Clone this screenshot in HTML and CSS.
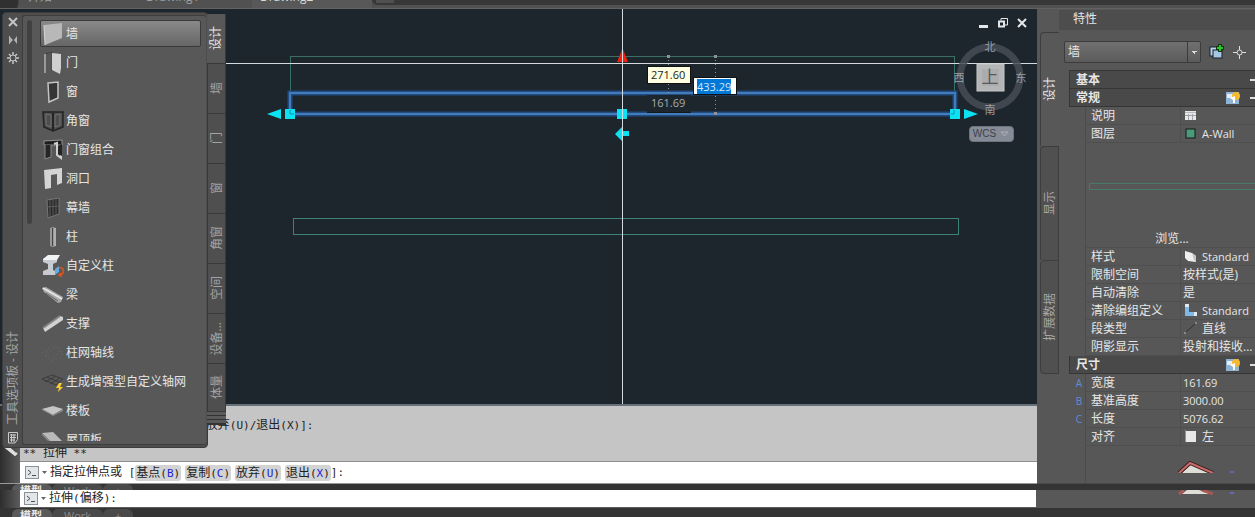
FILE: index.html
```html
<!DOCTYPE html>
<html lang="zh-CN">

<head>
    <meta charset="UTF-8">
    <meta name="viewport" content="width=device-width, initial-scale=1.0">
    <title>墙 - 设计</title>
    <link rel="stylesheet" href="styles.css">
</head>

<body>

    <nav class="file-tabs">
        <a href="#" class="file-tab start">开始</a>
        <a href="#" class="file-tab">Drawing1</a>
        <a href="#" class="file-tab active">Drawing2</a>
        <span class="file-rest"><i class="file-new"></i></span>
    </nav>

    <main class="main">
        <div class="workspace">

            <div class="canvas">
                <svg class="drawing" width="100%" height="100%">
                    <rect x="290.5" y="47.5" width="664" height="57" fill="none" stroke="#3a6f68" />
                    <rect x="290" y="84" width="665" height="21" fill="none" stroke="#214b82" stroke-width="5" />
                    <rect x="290" y="84" width="665" height="21" fill="none" stroke="#437db9" stroke-width="2" />
                    <rect x="293.5" y="209.5" width="665" height="16" fill="none" stroke="#3f8278" />
                    <g stroke="#8b9299" stroke-dasharray="1 3">
                        <path d="M668.5 47V105" />
                        <path d="M715.5 47V105" />
                    </g>
                    <g fill="#8b9299">
                        <rect x="667" y="46" width="3" height="3" />
                        <rect x="714" y="46" width="3" height="3" />
                        <rect x="714" y="103" width="3" height="3" />
                    </g>
                    <path d="M622.5 39L628 53H617Z" fill="#f0200c" />
                    <g fill="#0be2f2">
                        <rect x="285" y="100" width="10" height="10" />
                        <rect x="617" y="100" width="10" height="10" />
                        <rect x="950" y="100" width="10" height="10" />
                        <path d="M267 105L281 100V110Z" />
                        <path d="M978 105L964 100V110Z" />
                        <path d="M615 125L622 118V122H629V127H622V132Z" />
                    </g>
                    <path d="M290 101V105H294M954 101V105H951" fill="none" stroke="#168fa8" />
                    <g fill="#d5dade">
                        <rect x="226" y="54" width="100%" height="1" />
                        <rect x="622" y="0" width="1" height="100%" />
                    </g>
                </svg>

                <span class="dim dim-tip">271.60</span>
                <span class="dim dim-plain">161.69</span>
                <input class="dim dim-edit" id="stretch" type="text" value="433.29" aria-label="拉伸">

                <div class="window-buttons">
                    <button type="button" aria-label="最小化"><svg width="12" height="12"><path d="M1 8H10V11H1Z" fill="#e4e7ea" /></svg></button>
                    <button type="button" aria-label="还原"><svg width="12" height="12" fill="none" stroke="#e4e7ea"><path d="M4 3.5V1.5H10.5V8H8" /><path d="M2 4.5H7V9.5H2Z" stroke-width="2" /></svg></button>
                    <button type="button" aria-label="关闭"><svg width="12" height="12"><path d="M2 2L10 10M10 2L2 10" stroke="#e4e7ea" stroke-width="2" /></svg></button>
                </div>

                <div class="view-cube">
                    <svg width="78" height="78" viewBox="0 0 78 78">
                        <circle cx="38" cy="38" r="30" fill="none" stroke="#474e58" stroke-width="7" opacity=".85" />
                        <rect x="25" y="25" width="27" height="27" fill="#b3b5b6" stroke="#c7c9ca" />
                        <path d="M30 30H47V47H30Z" fill="#aaacad" />
                        <g class="compass">
                            <text x="38" y="12">北</text>
                            <text x="38" y="75">南</text>
                            <text x="7" y="43">西</text>
                            <text x="69" y="43">东</text>
                        </g>
                        <text class="cube-face" x="38" y="44">上</text>
                    </svg>
                    <button type="button" class="wcs">WCS <svg width="9" height="6"><path d="M1 1H8L4.5 5Z" fill="none" stroke="#a9aeb7" /></svg></button>
                </div>
            </div>

            <div class="history">
                <div class="grip">
                    <svg width="16" height="14"><path d="M2 0L12 8L14 6M5 0L13 7" fill="none" stroke="#e0e0e0" stroke-width="2" /></svg>
                </div>
                <div class="history-text">
                    <p>指定拉伸点或 <code>[</code>基点<code>(B)/</code>复制<code>(C)/</code>放弃<code>(U)/</code>退出<code>(X)]:</code></p>
                    <p></p>
                    <p><code>** </code>拉伸<code> **</code></p>
                </div>
            </div>

            <div class="prompt">
                <div class="prompt-line">
                    <svg class="prompt-icon" width="14" height="13"><rect x=".5" y=".5" width="13" height="12" fill="#e3e6e9" stroke="#8a9096" /><path d="M3 4L6 6.5L3 9M7 9.5H11" fill="none" stroke="#4a4f55" /></svg>
                    <svg class="prompt-arrow" width="5" height="3"><path d="M0 0H5L2.5 3Z" fill="#666" /></svg>
                    <span>指定拉伸点或<code> [</code></span>
                    <button type="button">基点<code>(<b>B</b>)</code></button>
                    <button type="button">复制<code>(<b>C</b>)</code></button>
                    <button type="button">放弃<code>(<b>U</b>)</code></button>
                    <button type="button">退出<code>(<b>X</b>)</code></button>
                    <code>]:</code>
                </div>
            </div>

            <section class="palette">
                <div class="palette-body">
                    <div class="palette-bar">
                        <svg width="12" height="12"><path d="M2 2L10 10M10 2L2 10" stroke="#c4c4c4" stroke-width="2" /></svg>
                        <svg width="12" height="12" fill="#b4b4b4"><path d="M2 2H3V10H2ZM3 3L6 6L3 9ZM10 2V10L7 6Z" /></svg>
                        <svg width="12" height="12" fill="none" stroke="#c4c4c4"><circle cx="6" cy="6" r="3" /><path d="M6 0V3M6 9V12M0 6H3M9 6H12M2 2L4 4M8 8L10 10M10 2L8 4M4 8L2 10" stroke-width="1.5" /></svg>
                        <span class="vertical palette-title">工具选项板 - 设计</span>
                        <svg width="12" height="13" fill="none" stroke="#c9c9c9"><path d="M1.5 1.5H10.5V8.5L8 12H1.5Z" /><path d="M3 4H9M3 6.5H9M3 9H8M4.5 3V11M7 3V11" /></svg>
                    </div>
                    <div class="palette-content">
                        <div class="scroll"></div>
                        <div class="tools">
                            <button type="button" class="tool selected"><svg viewBox="0 0 22 24"><path d="M2 3L20 1V16L3 23Z" fill="#b8b8b8" /><path d="M2 3L3 23" stroke="#d4d4d4" /></svg>墙</button>
                            <button type="button" class="tool"><svg viewBox="0 0 22 24"><path d="M3 3L10 1V20" fill="none" stroke="#444" /><path d="M3 3V22" stroke="#999" stroke-width="2" /><path d="M10 2L19 3V17L18 23L10 19Z" fill="#d0d0d0" /></svg>门</button>
                            <button type="button" class="tool"><svg viewBox="0 0 22 24"><path d="M6 3L16 2V18L7 22Z" fill="#353535" stroke="#c4c4c4" stroke-width="1.5" /></svg>窗</button>
                            <button type="button" class="tool"><svg viewBox="0 0 22 24" fill="#4d4d4d" stroke="#242424" stroke-width="1.5"><path d="M1 3H21V18L11 22L2 18Z" /><path d="M11 4V22" stroke-width="2" /><path d="M4 5L9 6V18L4 16ZM18 5L13 6V18L18 16Z" stroke="#707070" stroke-width="1" /></svg>角窗</button>
                            <button type="button" class="tool"><svg viewBox="0 0 22 24"><path d="M2 3L20 2V7H2Z" fill="#1d1d1d" stroke="#aaa" stroke-width=".8" /><path d="M3 7V21L9 19V7" fill="#262626" stroke="#888" /><path d="M12 6L15 5V17L19 20V7" fill="none" stroke="#d0d0d0" stroke-width="2" /><path d="M16 8L20 6V18L16 16Z" fill="#242424" /></svg>门窗组合</button>
                            <button type="button" class="tool"><svg viewBox="0 0 22 24"><path d="M2 3L20 1V16L15 18V7L9 8V21L3 22Z" fill="#d4d4d4" /></svg>洞口</button>
                            <button type="button" class="tool"><svg viewBox="0 0 22 24"><path d="M5 4L17 2V18L6 22Z" fill="#2b2b2b" stroke="#777" /><path d="M8 4V21M11 3V20M14 3V19M5 11L17 10" stroke="#5c5c5c" /></svg>幕墙</button>
                            <button type="button" class="tool"><svg viewBox="0 0 22 24"><path d="M8 3L11 2L14 3V21L11 22L8 21Z" fill="#999" /><path d="M10.5 3V21" stroke="#444" /><path d="M13 3V21" stroke="#c5c5c5" /></svg>柱</button>
                            <button type="button" class="tool"><svg viewBox="0 0 22 24"><path d="M1 5L6 1H18L15 6H1Z" fill="#f1f3f4" /><path d="M1 6H15V8L11 10V16L13 17V21H1V17L6 15V10L1 8Z" fill="#c5cbd0" /><path d="M13 21V15L17 12V18Z" fill="#66a9df" /><path d="M17 14C22 12 23 20 18 21M19 19L17 21L20 23" fill="none" stroke="#d9571f" stroke-width="1.5" /></svg>自定义柱</button>
                            <button type="button" class="tool"><svg viewBox="0 0 22 24"><path d="M0 5L4 4L21 14L19 19L16 20L2 9Z" fill="#a8a8a8" /><path d="M1 5L20 16" stroke="#e5e5e5" stroke-width="2" /><path d="M4 10L16 18" stroke="#656565" /></svg>梁</button>
                            <button type="button" class="tool"><svg viewBox="0 0 22 24"><path d="M1 16L18 4L21 5V8L3 20Z" fill="#d2d2d2" /><path d="M1 16L18 4" stroke="#858585" stroke-width="2" /></svg>支撑</button>
                            <button type="button" class="tool"><svg viewBox="0 0 22 24" fill="none" stroke="#6b6b6b" stroke-dasharray="1 3"><path d="M0 12L9 5L20 7M3 16L13 6M10 20L19 9" /><ellipse cx="12" cy="13" rx="8" ry="6" /></svg>柱网轴线</button>
                            <button type="button" class="tool"><svg viewBox="0 0 22 24"><path d="M0 9L10 5L21 9L14 15L0 9M5 7L17 12M3 12L14 6M8 14L18 8" fill="none" stroke="#3c3c3c" /><path d="M17 13L14 18H17L16 22L21 17H18L20 13Z" fill="#ffca2b" /></svg>生成增强型自定义轴网</button>
                            <button type="button" class="tool"><svg viewBox="0 0 22 24"><path d="M0 10L11 7L21 10L11 16Z" fill="#c5c5c5" /><path d="M0 10L11 16L21 10V12L11 17L0 11Z" fill="#888" /></svg>楼板</button>
                            <button type="button" class="tool"><svg viewBox="0 0 22 24"><path d="M0 5L11 4L21 14L11 16Z" fill="#b9b9b9" /><path d="M0 5L11 16V18L0 7Z" fill="#888" /></svg>屋顶板</button>
                        </div>
                    </div>
                </div>
                <div class="palette-tabs">
                    <button type="button" class="active"><span class="vertical">设计</span></button>
                    <button type="button"><span class="vertical">墙</span></button>
                    <button type="button"><span class="vertical">门</span></button>
                    <button type="button"><span class="vertical">窗</span></button>
                    <button type="button"><span class="vertical">角窗</span></button>
                    <button type="button"><span class="vertical">空间</span></button>
                    <button type="button"><span class="vertical">设备...</span></button>
                    <button type="button"><span class="vertical">体量</span></button>
                    <div class="tab-stack"></div>
                </div>
            </section>
        </div>

        <aside class="properties">
            <div class="prop-tabs">
                <button type="button" class="active"><span class="vertical">设计</span></button>
                <button type="button"><span class="vertical">显示</span></button>
                <button type="button"><span class="vertical">扩展数据</span></button>
            </div>
            <div class="prop-panel">
                <h2>特性</h2>
                <div class="prop-select">
                    <select aria-label="对象类型">
                        <option>墙</option>
                    </select>
                    <svg width="16" height="16"><rect x="1" y="3" width="9" height="9" fill="#b8d3ea" stroke="#17202a" /><rect x="4" y="6" width="9" height="8" fill="#a5c6e4" stroke="#17202a" /><path d="M11 0V8M7 4H15" stroke="#12330f" stroke-width="4" /><path d="M11 1V7M8 4H14" stroke="#29c729" stroke-width="2" /></svg>
                    <svg width="13" height="13" fill="none" stroke="#e0e0e0"><path d="M6.5 0V4M6.5 9V13M0 6.5H4M9 6.5H13" /><circle cx="6.5" cy="6.5" r="2.5" /></svg>
                </div>

                <div class="prop-list">
                    <h3>基本<i class="minus"></i></h3>
                    <h3>常规
                        <svg width="14" height="14"><path d="M0 1H13V13H0Z" fill="#8fb4d3" /><path d="M1 3H7V7H1Z" fill="#e9eef2" /><circle cx="10" cy="5" r="4" fill="#f6b92e" /><path d="M4 7L9 5V12H7V9Z" fill="#fff" /></svg>
                        <i class="minus"></i></h3>
                    <table>
                        <tr><td></td><th>说明</th><td><svg width="14" height="12"><rect x="2" y="2" width="11" height="9" fill="#e8e8e8" /><path d="M2 3.5H13" stroke="#b5b9bd" /><path d="M2 6.5H13M5.5 5V11M9.5 5V11" stroke="#a0a4a8" /></svg></td></tr>
                        <tr><td></td><th>图层</th><td><svg width="14" height="12"><rect x="3" y="2" width="9" height="9" fill="#4a9a7c" stroke="#161616" /></svg><span class="latin">A-Wall</span></td></tr>
                        <tr class="preview"><td></td><td colspan="2">
                            <div class="wall-preview"></div>
                            <button type="button" class="browse">浏览...</button>
                        </td></tr>
                        <tr><td></td><th>样式</th><td><svg width="14" height="12"><path d="M2 1L9 3L13 6V12L5 11L2 8Z" fill="#eee" /><path d="M9 3L13 6V12L11 10Z" fill="#c4c4c4" /></svg><span class="latin">Standard</span></td></tr>
                        <tr><td></td><th>限制空间</th><td>按样式(是)</td></tr>
                        <tr><td></td><th>自动清除</th><td>是</td></tr>
                        <tr><td></td><th>清除编组定义</th><td><svg width="14" height="12"><path d="M2 0H6V8H14V12H2Z" fill="#80b9e5" /><path d="M2 0H6V3H2ZM11 8H14V12H11Z" fill="#e2e9ee" /></svg><span class="latin">Standard</span></td></tr>
                        <tr><td></td><th>段类型</th><td><svg width="14" height="12"><path d="M2 11L13 1" stroke="#303030" /><path d="M1 10H3V12H1ZM12 0H14V2H12Z" fill="#888" /></svg>直线</td></tr>
                        <tr><td></td><th>阴影显示</th><td>投射和接收...</td></tr>
                    </table>
                    <h3>尺寸
                        <svg width="14" height="14"><path d="M0 1H13V13H0Z" fill="#8fb4d3" /><path d="M1 3H7V7H1Z" fill="#e9eef2" /><circle cx="10" cy="5" r="4" fill="#f6b92e" /><path d="M4 7L9 5V12H7V9Z" fill="#fff" /></svg>
                        <i class="minus"></i></h3>
                    <table>
                        <tr><td class="key">A</td><th>宽度</th><td class="latin">161.69</td></tr>
                        <tr><td class="key">B</td><th>基准高度</th><td class="latin">3000.00</td></tr>
                        <tr><td class="key">C</td><th>长度</th><td class="latin">5076.62</td></tr>
                        <tr><td></td><th>对齐</th><td><svg width="14" height="12"><rect x="3" y="1" width="10" height="11" fill="#e8e8e8" /><path d="M2.5 0V12" stroke="#4fa3e6" /></svg>左</td></tr>
                    </table>
                    <div class="wall-figure">
                        <svg width="60" height="12"><path d="M5 12L14 3L35 12Z" fill="#deded6" /><path d="M2 12L13 2L36 12" fill="none" stroke="#3a2020" stroke-width="4" /><path d="M2 12L13 2L36 12" fill="none" stroke="#c96b68" stroke-width="2" /><path d="M53 11H57" stroke="#6068b8" stroke-width="2" /></svg>
                    </div>
                </div>
            </div>
        </aside>
    </main>

    <nav class="layout-tabs">
        <a href="#" class="active">模型</a>
        <a href="#">Work</a>
        <a href="#">+</a>
    </nav>

    <footer class="status">
        <div class="prompt-line">
            <svg class="prompt-icon" width="14" height="13"><rect x=".5" y=".5" width="13" height="12" fill="#e3e6e9" stroke="#8a9096" /><path d="M3 4L6 6.5L3 9M7 9.5H11" fill="none" stroke="#4a4f55" /></svg>
            <svg class="prompt-arrow" width="5" height="3"><path d="M0 0H5L2.5 3Z" fill="#666" /></svg>
            <span>拉伸<code>(</code>偏移<code>):</code></span>
        </div>
        <div class="status-side">
            <svg width="60" height="5"><path d="M5 4L10 0H22L34 4Z" fill="#deded6" /><path d="M2 4L7 0M25 0L36 4" stroke="#a95754" stroke-width="3" /><path d="M53 3H57" stroke="#6068b8" stroke-width="2" /></svg>
        </div>
    </footer>

    <nav class="layout-tabs tall">
        <a href="#" class="active">模型</a>
        <a href="#">Work</a>
        <a href="#">+</a>
    </nav>

    <script>
        var stretch = document.getElementById("stretch");
        stretch.focus();
        stretch.select();
    </script>

</body>

</html>
```
FILE: styles.css
```css
* {
    box-sizing: border-box;
}

body {
    margin: 0;
    height: 100vh;
    display: flex;
    flex-direction: column;
    overflow: hidden;
    background-color: #575757;
    color: #e6e6e6;
    font-family: "Open Sans", "Noto Sans CJK SC", sans-serif;
    font-size: 12px;
    line-height: 18px;
}

button,
select,
input {
    font: inherit;
    color: inherit;
    border: none;
    padding: 0;
    background: none;
}

button {
    cursor: pointer;
}

a {
    color: inherit;
    text-decoration: none;
}

svg {
    flex: none;
    display: block;
}

code {
    font-family: "DejaVu Sans Mono", monospace;
    font-size: 11px;
    white-space: pre;
}

.latin {
    font-size: 11px;
}

.vertical {
    writing-mode: vertical-rl;
    text-orientation: sideways;
    transform: rotate(180deg);
    white-space: nowrap;
}

/* file tabs */
.file-tabs {
    flex: none;
    height: 9px;
    display: flex;
    align-items: flex-end;
    overflow: hidden;
    background-color: #515151;
    border-bottom: 1px solid #626262;
}

.file-tab {
    width: 120px;
    padding: 0 0 2px 14px;
    color: #a0a0a0;
}

.file-tab.start {
    width: 132px;
    padding-left: 28px;
    background: radial-gradient(circle at 6px 14px, #303030 12px, transparent 13px);
}

.file-tab.active {
    padding-left: 8px;
    background-color: #585858;
    color: #dcdcdc;
}

.file-rest {
    flex: 1;
    height: 5px;
    margin-bottom: 3px;
    background-color: #383838;
    border-bottom-left-radius: 5px;
}

.file-new {
    display: block;
    width: 18px;
    height: 3px;
    margin-left: 4px;
    background-color: #505050;
}

/* main area */
.main {
    flex: 1;
    min-height: 0;
    display: flex;
}

.workspace {
    position: relative;
    flex: 1;
    min-width: 0;
    display: flex;
    flex-direction: column;
}

.canvas {
    position: relative;
    flex: 1;
    min-height: 0;
    overflow: hidden;
    background-color: #1e262d;
}

.drawing {
    position: absolute;
    inset: 0;
}

.dim {
    position: absolute;
    width: 44px;
    height: 18px;
    padding-left: 3px;
    font-size: 11px;
    line-height: 16px;
}

.dim-tip {
    left: 647px;
    top: 57px;
    border: 1px solid #111;
    background-color: #ffffe1;
    color: #222;
}

.dim-plain {
    left: 647px;
    top: 86px;
    padding-left: 4px;
    background-color: #1e262d;
    border-bottom: 1px solid #14191d;
    color: #a8acb0;
}

.dim-edit {
    left: 693px;
    top: 68px;
    border: 1px solid #111;
    background-color: #fff;
    color: #222;
    outline: none;
}

.dim-edit::selection {
    background-color: #0078d7;
    color: #d5e8fa;
}

.window-buttons {
    position: absolute;
    top: 8px;
    right: 9px;
    display: flex;
    gap: 7px;
}

.view-cube {
    position: absolute;
    top: 30px;
    right: 7px;
    display: flex;
    flex-direction: column;
    align-items: center;
    gap: 9px;
}

.compass text {
    font-size: 11px;
    fill: #9a9ea4;
    text-anchor: middle;
}

.cube-face {
    font-size: 17px;
    fill: #55585c;
    text-anchor: middle;
}

.wcs {
    display: flex;
    align-items: center;
    justify-content: center;
    gap: 4px;
    width: 45px;
    height: 16px;
    border: 1px solid #6f757e;
    border-radius: 4px;
    background-color: #868c97;
    color: #3c424b;
    font-family: "Liberation Sans", sans-serif;
    font-size: 10px;
    line-height: 14px;
}

/* command line */
.history {
    flex: none;
    display: flex;
    border-top: 2px solid #66707a;
    background-color: #c5c5c5;
    color: #222;
    line-height: 14px;
}

.grip {
    display: flex;
    align-items: flex-end;
    width: 20px;
    padding-left: 3px;
    background: linear-gradient(to right, #2d2d2d, #5c5c5c);
}

.history-text {
    padding: 12px 0 1px 3px;
    white-space: nowrap;
}

.history p {
    margin: 0;
    height: 14px;
}

.prompt {
    flex: none;
    padding-left: 20px;
    border-bottom: 1px solid #999;
    background: linear-gradient(to right, #2d2d2d, #5c5c5c 20px);
}

.prompt-line {
    display: flex;
    align-items: center;
    height: 22px;
    padding-left: 5px;
    border-top: 1px solid #8f8f8f;
    background-color: #fff;
    color: #222;
    white-space: pre;
}

.prompt-icon {
    margin-right: 3px;
}

.prompt-arrow {
    margin-right: 3px;
}

.prompt-line button {
    height: 16px;
    margin-right: 4px;
    padding: 0 1px;
    border-radius: 3px;
    background-color: #d3d3d3;
    line-height: 16px;
}

.prompt-line button:last-of-type {
    margin-right: 0;
}

.prompt-line b {
    color: #2222d8;
    font-weight: normal;
}

/* tool palette floats over the drawing and the command line */
.palette {
    position: absolute;
    top: 3px;
    bottom: 36px;
    left: 2px;
    display: flex;
    align-items: flex-start;
}

.palette-body {
    align-self: stretch;
    display: flex;
    width: 206px;
    padding: 2px 1px 2px 0;
    border: 1px solid #3c3c3c;
    border-radius: 4px;
    background-color: #4e4e4e;
}

.palette-bar {
    display: flex;
    flex-direction: column;
    align-items: center;
    gap: 6px;
    width: 19px;
    padding: 1px 0;
}

.palette-title {
    margin-top: auto;
    color: #a6a6a6;
}

.palette-content {
    flex: 1;
    min-width: 0;
    display: flex;
    padding: 4px 0 3px 4px;
    border: 1px solid #3d3d3d;
    border-right: none;
    border-radius: 3px;
    background-color: #585858;
}

.scroll {
    width: 5px;
    height: 204px;
    margin-right: 8px;
    border-radius: 3px;
    background-color: #414141;
}

.tools {
    flex: 1;
    display: flex;
    flex-direction: column;
    gap: 2px;
    overflow: hidden;
}

.tool {
    flex: none;
    display: flex;
    align-items: center;
    gap: 2px;
    width: 161px;
    height: 27px;
    padding: 0 1px;
    border: 1px solid transparent;
    text-align: left;
}

.tool svg {
    width: 22px;
    height: 24px;
}

.tool.selected {
    border-color: #3a3a3a;
    border-radius: 2px;
    background: linear-gradient(#898989, #666);
}

.palette-tabs {
    display: flex;
    flex-direction: column;
    width: 19px;
    margin-top: 2px;
    margin-left: -1px;
    background-color: #4f4f4f;
}

.palette-tabs button {
    display: flex;
    align-items: center;
    justify-content: center;
    height: 50px;
    border: 1px solid #393939;
    border-top: none;
    color: #a3a3a3;
}

.palette-tabs .active {
    border-left: none;
    background-color: #585858;
    color: #e6e6e6;
}

.palette-tabs button:last-of-type {
    height: 48px;
}

.tab-stack {
    height: 13px;
    border-bottom: 1px solid #333;
    background: repeating-linear-gradient(#5a5a5a 0, #5a5a5a 3px, #333 3px, #333 4px);
}

/* properties */
.properties {
    flex: none;
    width: 218px;
    display: flex;
    overflow: hidden;
    padding-left: 3px;
    border-bottom: 1px solid #4a4a4a;
}

.prop-tabs {
    flex: none;
    display: flex;
    flex-direction: column;
    width: 19px;
    padding-top: 23px;
}

.prop-tabs button {
    display: flex;
    align-items: center;
    justify-content: center;
    height: 114px;
    border: 1px solid #3d3d3d;
    border-bottom: none;
    border-radius: 4px 0 0 0;
    background-color: #505050;
    color: #a6a6a6;
}

.prop-tabs button:last-child {
    border-bottom: 1px solid #3d3d3d;
    border-bottom-left-radius: 4px;
}

.prop-tabs .active {
    border-right: none;
    background-color: #585858;
    color: #e6e6e6;
}

.prop-panel {
    flex: 1;
    min-width: 0;
    display: flex;
    flex-direction: column;
}

h2,
h3 {
    margin: 0;
    font-size: 12px;
}

h2 {
    height: 20px;
    margin-top: 1px;
    padding-left: 14px;
    background-color: #4d4d4d;
    font-weight: normal;
}

.prop-select {
    display: flex;
    align-items: center;
    gap: 8px;
    padding: 11px 0 7px 5px;
}

.prop-select select {
    appearance: none;
    width: 137px;
    height: 22px;
    padding-left: 3px;
    border: 1px solid #3b3b3b;
    border-radius: 2px;
    background:
        linear-gradient(45deg, transparent 50%, #dedede 50%) right 6px top 9px / 3px 3px no-repeat,
        linear-gradient(315deg, transparent 50%, #dedede 50%) right 3px top 9px / 3px 3px no-repeat,
        linear-gradient(#3b3b3b, #3b3b3b) right 12px top 0 / 1px 100% no-repeat,
        linear-gradient(#707070, #5b5b5b);
}

.prop-list {
    flex: 1;
    min-height: 0;
    display: flex;
    flex-direction: column;
    margin-left: 10px;
    border-top: 1px solid #363636;
}

.prop-list h3 {
    flex: none;
    display: flex;
    align-items: center;
    height: 18px;
    padding-left: 6px;
    border-left: 1px solid #363636;
    border-bottom: 1px solid #363636;
    background-color: #494949;
    line-height: 16px;
}

.prop-list h3 svg {
    margin-left: auto;
    margin-right: 10px;
}

.minus {
    width: 5px;
    height: 2px;
    background-color: #ddd;
}

h3 .minus:only-child {
    margin-left: auto;
}

table {
    width: 100%;
    table-layout: fixed;
    border-spacing: 0;
}

tr > :first-child {
    width: 17px;
    border-right: 1px solid #4c4c4c;
    border-bottom: none;
}

th,
td {
    height: 18px;
    padding: 0;
    border-bottom: 1px solid #4f4f4f;
    font-weight: normal;
    line-height: 17px;
    text-align: left;
    white-space: nowrap;
}

th {
    width: 95px;
    padding-left: 5px;
    border-right: 1px solid #4f4f4f;
}

th + td {
    padding-left: 2px;
}

td svg {
    display: inline-block;
    margin-right: 5px;
    vertical-align: -1px;
}

td.key {
    padding-left: 4px;
    color: #5b8fdc;
    font-size: 10px;
    text-align: center;
}

.preview td {
    height: 105px;
    padding-left: 3px;
    vertical-align: bottom;
}

.wall-preview {
    height: 7px;
    margin-bottom: 39px;
    border: 1px solid #487a6a;
    border-right: none;
}

.browse {
    display: block;
    width: 100%;
    height: 18px;
}

.wall-figure {
    flex: 1;
    margin-left: 16px;
    padding: 15px 0 0 91px;
    border-left: 1px solid #4c4c4c;
}

/* layout tabs and second command line */
.layout-tabs {
    flex: none;
    display: flex;
    height: 6px;
    padding-left: 12px;
    overflow: hidden;
    background-color: #343434;
    color: #8d8d8d;
    font-size: 11px;
    line-height: 14px;
}

.layout-tabs.tall {
    height: 9px;
    padding-top: 1px;
}

.layout-tabs a {
    height: 16px;
    padding: 0 12px;
    border-radius: 6px 6px 0 0;
    background-color: #4a4a4a;
}

.layout-tabs .active {
    padding: 0 10px 0 8px;
    background-color: #5a5a5a;
    color: #e6e6e6;
    font-weight: bold;
}

.status {
    flex: none;
    display: flex;
    height: 18px;
    padding-left: 20px;
    background: linear-gradient(to right, #2d2d2d, #5c5c5c 20px);
}

.status .prompt-line {
    flex: 1;
    height: 17px;
    padding-left: 4px;
    border-top: none;
}

.status-side {
    width: 219px;
    padding-left: 141px;
    background-color: #585858;
}
```
